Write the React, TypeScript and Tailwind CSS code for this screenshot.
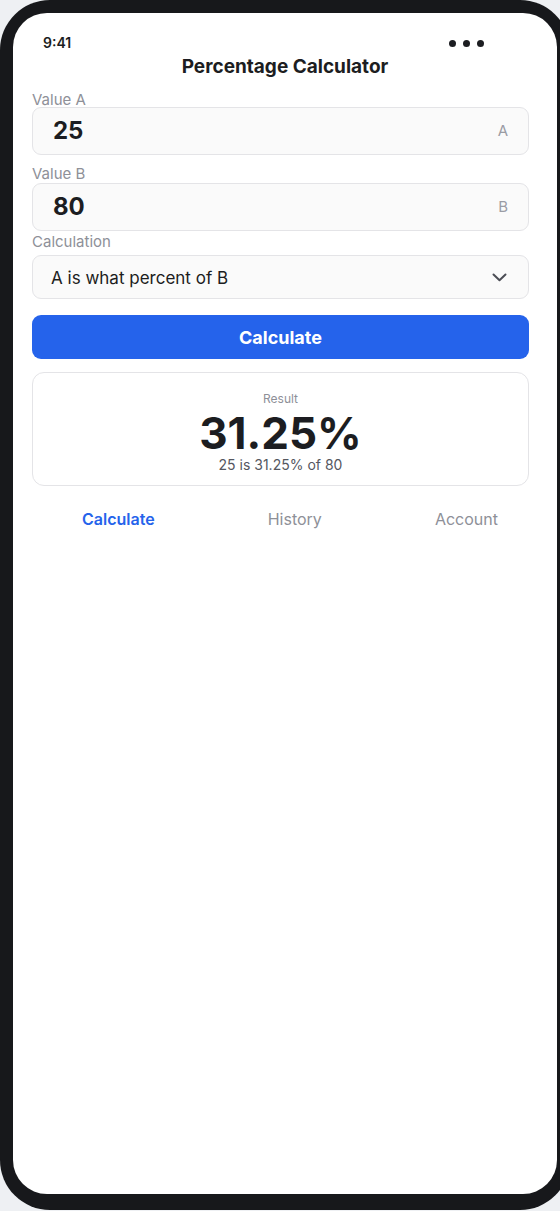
import React from "react";

export default function App() {
  return (
    <div
      className="w-[560px] h-[1211px] overflow-hidden bg-[#eef0f3]"
      style={{ fontFamily: "Inter, 'Noto Sans', sans-serif" }}
    >
      <div className="w-[570px] h-[1210px] rounded-[50px] bg-[#17181b] pt-[13px] pl-[13px] pr-[13px] pb-[16px] flex">
        <div className="flex-1 rounded-[34px] bg-white flex flex-col">
          {/* status bar */}
          <div className="mt-[20px] h-[20px] flex items-center justify-between pl-[30px] pr-[73px]">
            <span className="text-[14px] leading-[20px] font-semibold text-[#1c1d21]">9:41</span>
            <div className="flex items-center gap-[7px]">
              <span className="w-[7px] h-[7px] rounded-full bg-[#1c1d21]" />
              <span className="w-[7px] h-[7px] rounded-full bg-[#1c1d21]" />
              <span className="w-[7px] h-[7px] rounded-full bg-[#1c1d21]" />
            </div>
          </div>
          <h1 className="text-center text-[19px] leading-[28px] font-bold text-[#1c1d21]">
            Percentage Calculator
          </h1>

          <div className="pl-[19px] pr-[28px] flex flex-col">
            <label className="mt-[11px] text-[15px] leading-none text-[#8e9098]">Value A</label>
            <div className="h-[48px] rounded-[9px] border border-[#e4e4e7] bg-[#fafafa] flex items-center justify-between pl-[20px] pr-[20px]">
              <span className="text-[24px] font-bold text-[#1c1d21]">25</span>
              <span className="text-[15px] text-[#9a9ca4]">A</span>
            </div>

            <label className="mt-[11px] text-[15px] leading-none text-[#8e9098]">Value B</label>
            <div className="mt-[2px] h-[48px] rounded-[9px] border border-[#e4e4e7] bg-[#fafafa] flex items-center justify-between pl-[20px] pr-[20px]">
              <span className="text-[24px] font-bold text-[#1c1d21]">80</span>
              <span className="text-[15px] text-[#9a9ca4]">B</span>
            </div>

            <label className="mt-[3px] text-[15px] leading-none text-[#8e9098]">Calculation</label>
            <div className="mt-[6px] h-[44px] rounded-[9px] border border-[#e4e4e7] bg-[#fafafa] flex items-center justify-between pl-[18px] pr-[21px]">
              <span className="text-[17px] leading-[24px] pt-[2px] text-[#1c1d21]">A is what percent of B</span>
              <svg width="15" height="9" viewBox="0 0 15 9" fill="none">
                <path d="M1.5 1.5 L7.5 7.2 L13.5 1.5" stroke="#4b4d55" strokeWidth="2" strokeLinecap="round" strokeLinejoin="round" />
              </svg>
            </div>

            <button className="mt-[16px] h-[44px] rounded-[9px] bg-[#2563eb] text-white text-[18px] leading-[24px] pt-[2px] font-bold">
              Calculate
            </button>

            <div className="mt-[13px] rounded-[12px] border border-[#e4e4e7] bg-white flex flex-col items-center pt-[18px] pb-[11px]">
              <span className="text-[12px] leading-[16px] text-[#8e9098]">Result</span>
              <span className="mt-[3px] text-[44px] leading-[46px] font-bold text-[#1c1d21]">31.25%</span>
              <span className="text-[14px] leading-[18px] text-[#55575f]">25 is 31.25% of 80</span>
            </div>

            <div className="mt-[21px] flex justify-between pl-[50px] pr-[31px] text-[16px] leading-[24px]">
              <span className="font-semibold text-[#2563eb]">Calculate</span>
              <span className="text-[#8e9098]">History</span>
              <span className="text-[#8e9098]">Account</span>
            </div>
          </div>
        </div>
      </div>
    </div>
  );
}
